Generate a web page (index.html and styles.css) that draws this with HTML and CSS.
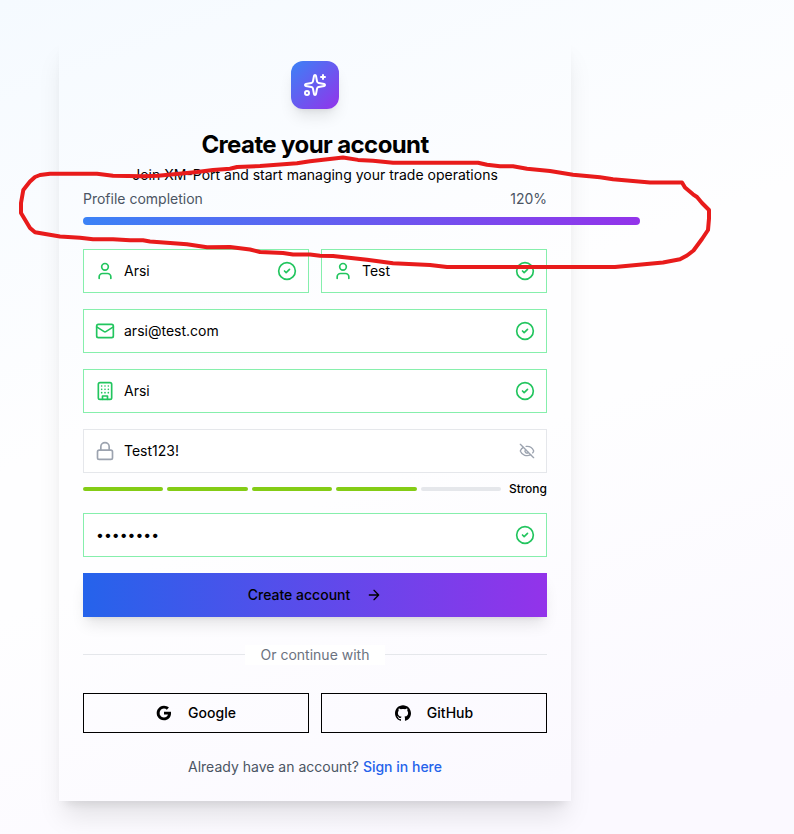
FILE: index.html
```html
<!DOCTYPE html>
<html lang="en">
<head>
<meta charset="utf-8">
<title>Create your account</title>
<link rel="stylesheet" href="styles.css">
</head>
<body>
<svg class="sprite" aria-hidden="true">
  <symbol id="user" viewBox="0 0 24 24"><path d="M19 21v-2a4 4 0 0 0-4-4H9a4 4 0 0 0-4 4v2"/><circle cx="12" cy="7" r="4"/></symbol>
  <symbol id="check" viewBox="0 0 24 24"><circle cx="12" cy="12" r="10"/><path d="m9 12 2 2 4-4"/></symbol>
  <symbol id="mail" viewBox="0 0 24 24"><rect x="2" y="4" width="20" height="16" rx="2"/><path d="m22 7-8.97 5.7a1.94 1.94 0 0 1-2.06 0L2 7"/></symbol>
  <symbol id="building" viewBox="0 0 24 24"><rect x="4" y="2" width="16" height="20" rx="2"/><path d="M9 22v-4h6v4M8 6h.01M16 6h.01M12 6h.01M12 10h.01M12 14h.01M16 10h.01M16 14h.01M8 10h.01M8 14h.01"/></symbol>
  <symbol id="lock" viewBox="0 0 24 24"><rect x="3" y="11" width="18" height="11" rx="2"/><path d="M7 11V7a5 5 0 0 1 10 0v4"/></symbol>
</svg>
<main class="card">
  <header class="header">
    <div class="logo">
      <svg class="icon icon-lg" viewBox="0 0 24 24"><path d="M11.017 2.814a1 1 0 0 1 1.966 0l1.051 5.558a2 2 0 0 0 1.594 1.594l5.558 1.051a1 1 0 0 1 0 1.966l-5.558 1.051a2 2 0 0 0-1.594 1.594l-1.051 5.558a1 1 0 0 1-1.966 0l-1.051-5.558a2 2 0 0 0-1.594-1.594l-5.558-1.051a1 1 0 0 1 0-1.966l5.558-1.051a2 2 0 0 0 1.594-1.594z"/><path d="M20 2v4M22 4h-4"/><circle cx="4" cy="20" r="2"/></svg>
    </div>
    <h1 class="title">Create your account</h1>
    <p class="subtitle">Join XM-Port and start managing your trade operations</p>
  </header>
  <section class="progress">
    <div class="progress-labels"><span>Profile completion</span><span>120%</span></div>
    <div class="track"><div class="fill" style="width:120%"></div></div>
  </section>
  <form class="form">
    <div class="pair">
      <div class="field valid"><svg class="icon"><use href="#user"/></svg><input type="text" value="Arsi" aria-label="First name"><svg class="icon"><use href="#check"/></svg></div>
      <div class="field valid"><svg class="icon"><use href="#user"/></svg><input type="text" value="Test" aria-label="Last name"><svg class="icon"><use href="#check"/></svg></div>
    </div>
    <div class="field valid"><svg class="icon"><use href="#mail"/></svg><input type="text" value="arsi@test.com" aria-label="Email"><svg class="icon"><use href="#check"/></svg></div>
    <div class="field valid"><svg class="icon"><use href="#building"/></svg><input type="text" value="Arsi" aria-label="Company"><svg class="icon"><use href="#check"/></svg></div>
    <div class="password">
      <div class="field"><svg class="icon"><use href="#lock"/></svg><input type="text" value="Test123!" aria-label="Password"><svg class="icon icon-sm" viewBox="0 0 24 24"><path d="M10.733 5.076a10.744 10.744 0 0 1 11.205 6.575 1 1 0 0 1 0 .696 10.747 10.747 0 0 1-1.444 2.49"/><path d="M14.084 14.158a3 3 0 0 1-4.242-4.242"/><path d="M17.479 17.499a10.75 10.75 0 0 1-15.417-5.151 1 1 0 0 1 0-.696 10.75 10.75 0 0 1 4.446-5.143"/><path d="m2 2 20 20"/></svg></div>
      <div class="strength"><i class="on"></i><i class="on"></i><i class="on"></i><i class="on"></i><i></i><span>Strong</span></div>
    </div>
    <div class="field valid"><input class="secret" type="password" value="Test123!" aria-label="Confirm password"><svg class="icon"><use href="#check"/></svg></div>
    <button class="submit" type="button">Create account<svg class="icon icon-sm" viewBox="0 0 24 24"><path d="M5 12h14M12 5l7 7-7 7"/></svg></button>
  </form>
  <div class="divider"><span>Or continue with</span></div>
  <div class="pair">
    <button class="social" type="button"><svg viewBox="0 0 24 24"><path d="M22.56 12.25c0-.78-.07-1.53-.2-2.25H12v4.26h5.92c-.26 1.37-1.04 2.53-2.21 3.31v2.77h3.57c2.08-1.92 3.28-4.74 3.28-8.09z"/><path d="M12 23c2.97 0 5.46-.98 7.28-2.66l-3.57-2.77c-.98.66-2.23 1.06-3.71 1.06-2.86 0-5.29-1.93-6.16-4.53H2.18v2.84C3.99 20.53 7.7 23 12 23z"/><path d="M5.84 14.09c-.22-.66-.35-1.36-.35-2.09s.13-1.43.35-2.09V7.07H2.18C1.43 8.55 1 10.22 1 12s.43 3.45 1.18 4.93l2.85-2.22.81-.62z"/><path d="M12 5.38c1.62 0 3.06.56 4.21 1.64l3.15-3.15C17.45 2.09 14.97 1 12 1 7.7 1 3.99 3.47 2.18 7.07l3.66 2.84c.87-2.6 3.3-4.53 6.16-4.53z"/></svg>Google</button>
    <button class="social" type="button"><svg viewBox="0 0 24 24"><path d="M12 .297c-6.63 0-12 5.373-12 12 0 5.303 3.438 9.8 8.205 11.385.6.113.82-.258.82-.577 0-.285-.01-1.04-.015-2.04-3.338.724-4.042-1.61-4.042-1.61C4.422 18.07 3.633 17.7 3.633 17.7c-1.087-.744.084-.729.084-.729 1.205.084 1.838 1.236 1.838 1.236 1.07 1.835 2.809 1.305 3.495.998.108-.776.417-1.305.76-1.605-2.665-.3-5.466-1.332-5.466-5.93 0-1.31.465-2.38 1.235-3.22-.135-.303-.54-1.523.105-3.176 0 0 1.005-.322 3.3 1.23.96-.267 1.98-.399 3-.405 1.02.006 2.04.138 3 .405 2.28-1.552 3.285-1.23 3.285-1.23.645 1.653.24 2.873.12 3.176.765.84 1.23 1.91 1.23 3.22 0 4.61-2.805 5.625-5.475 5.92.42.36.81 1.096.81 2.22 0 1.606-.015 2.896-.015 3.286 0 .315.21.69.825.57C20.565 22.092 24 17.592 24 12.297c0-6.627-5.373-12-12-12"/></svg>GitHub</button>
  </div>
  <p class="signin">Already have an account? <a href="#">Sign in here</a></p>
</main>
<svg class="annotation" viewBox="0 0 794 834"><path d="M35 177L40 175L50 173.7H97L113 175.7L143 176.3L158 175.7L187 173L197 172L213 170L230 168.7L237 167L260 166L297 163.3L310 161.3L343 157.5L358 159.9L373 160.7L393 162.7H478L487 164.8L500 166.3H513L527 168.7L550 171L573 174.7L600 177.3L613 179.3L650 182.5H682L685 187.5L693 194.3L697 197L702 203L709 210V218.5L708 230L702 239L693.5 250.5L687 255.5L680 259.3L663 262.5L647 264L615 267H447L430 265L393 263.3L367 259.7L333 256L320 255.7L310 254.5H293L283 253L260 252L250 249.5L230 247L207 247.3L187 244.3L150 241.5L143 240.3H130L113 239.3H93L80 237.7L60 236.5L35 232.3L30 228L21 213V203L23.3 190L30 181.5L35 177Z"/></svg>
</body>
</html>
```
FILE: styles.css
```css
* { box-sizing: border-box; }
body {
  margin: 0;
  height: 834px;
  overflow: hidden;
  font: 14px/20px Inter, "Liberation Sans", sans-serif;
  color: #000;
  background: linear-gradient(160deg, #f5faff 0%, #fefeff 42%, #fefeff 55%, #fbf9ff 88%, #fbf9ff 100%);
}
h1, p { margin: 0; }
button, input { font: inherit; color: inherit; }
.sprite { display: block; width: 0; height: 0; }
.icon {
  flex: none;
  width: 20px;
  height: 20px;
  fill: none;
  stroke: currentColor;
  stroke-width: 2;
  stroke-linecap: round;
  stroke-linejoin: round;
}
.icon-sm { width: 16px; height: 16px; }
.icon-lg { width: 24px; height: 24px; }
.card {
  width: 512px;
  height: 764px;
  margin: 37px 0 0 59px;
  padding: 24px;
  box-shadow: 0 20px 25px -5px rgba(0, 0, 0, .1), 0 8px 10px -6px rgba(0, 0, 0, .1);
}
.header { display: flex; flex-direction: column; align-items: center; }
.logo {
  display: flex;
  align-items: center;
  justify-content: center;
  width: 48px;
  height: 48px;
  margin-bottom: 20px;
  border-radius: 12px;
  color: #fff;
  background: linear-gradient(to bottom right, #3b82f6, #9333ea);
  box-shadow: 0 10px 15px -3px rgba(0, 0, 0, .1), 0 4px 6px -4px rgba(0, 0, 0, .1);
}
.title { font-size: 24px; line-height: 32px; font-weight: 700; letter-spacing: -.6px; }
.subtitle { margin-top: 4px; }
.progress { margin-top: 4px; }
.progress-labels { display: flex; justify-content: space-between; color: #4b5563; }
.track { height: 8px; margin-top: 8px; border-radius: 4px; }
.fill { height: 8px; border-radius: 4px; background: linear-gradient(to right, #3b82f6, #9333ea); }
.form { display: flex; flex-direction: column; gap: 16px; margin-top: 24px; }
.pair { display: grid; grid-template-columns: repeat(2, minmax(0, 1fr)); gap: 12px; }
.field {
  display: flex;
  align-items: center;
  gap: 9px;
  height: 44px;
  padding: 0 11px;
  border: 1px solid #e5e7eb;
  background: #fff;
  color: #9ca3af;
}
.valid { border-color: #86efac; color: #22c55e; }
.field input {
  flex: 1;
  min-width: 0;
  height: 40px;
  padding: 0 0 2px;
  border: 0;
  outline: 0;
  background: none;
  color: #000;
}
.field .secret { padding-left: 1px; }
.strength { display: flex; align-items: center; gap: 4px; height: 16px; margin-top: 8px; }
.strength i { flex: 1; height: 4px; border-radius: 2px; background: #e5e7eb; }
.strength .on { background: #84cc16; }
.strength span { margin-left: 4px; font-size: 12px; line-height: 16px; font-weight: 500; }
.submit {
  display: flex;
  align-items: center;
  justify-content: center;
  gap: 16px;
  height: 44px;
  padding: 0;
  border: 0;
  font-weight: 500;
  background: linear-gradient(to right, #2563eb, #9333ea);
  box-shadow: 0 10px 15px -3px rgba(0, 0, 0, .1), 0 4px 6px -4px rgba(0, 0, 0, .1);
}
.divider { display: flex; align-items: center; margin: 28px 0; color: #6b7280; }
.divider::before, .divider::after { content: ""; flex: 1; height: 1px; margin-bottom: 1px; background: #e5e7eb; }
.divider span { padding: 0 16px; background: #fff; }
.social {
  display: flex;
  align-items: center;
  justify-content: center;
  gap: 16px;
  height: 40px;
  padding: 0;
  border: 1px solid #000;
  background: transparent;
  font-weight: 500;
}
.social svg { width: 16px; height: 16px; fill: currentColor; }
.signin { margin-top: 24px; text-align: center; color: #4b5563; }
.signin a { color: #2563eb; font-weight: 500; text-decoration: none; }
.annotation { position: absolute; left: 0; top: 0; width: 794px; height: 834px; pointer-events: none; }
.annotation path { fill: none; stroke: #e81b1b; stroke-width: 4; stroke-linejoin: round; }
```
